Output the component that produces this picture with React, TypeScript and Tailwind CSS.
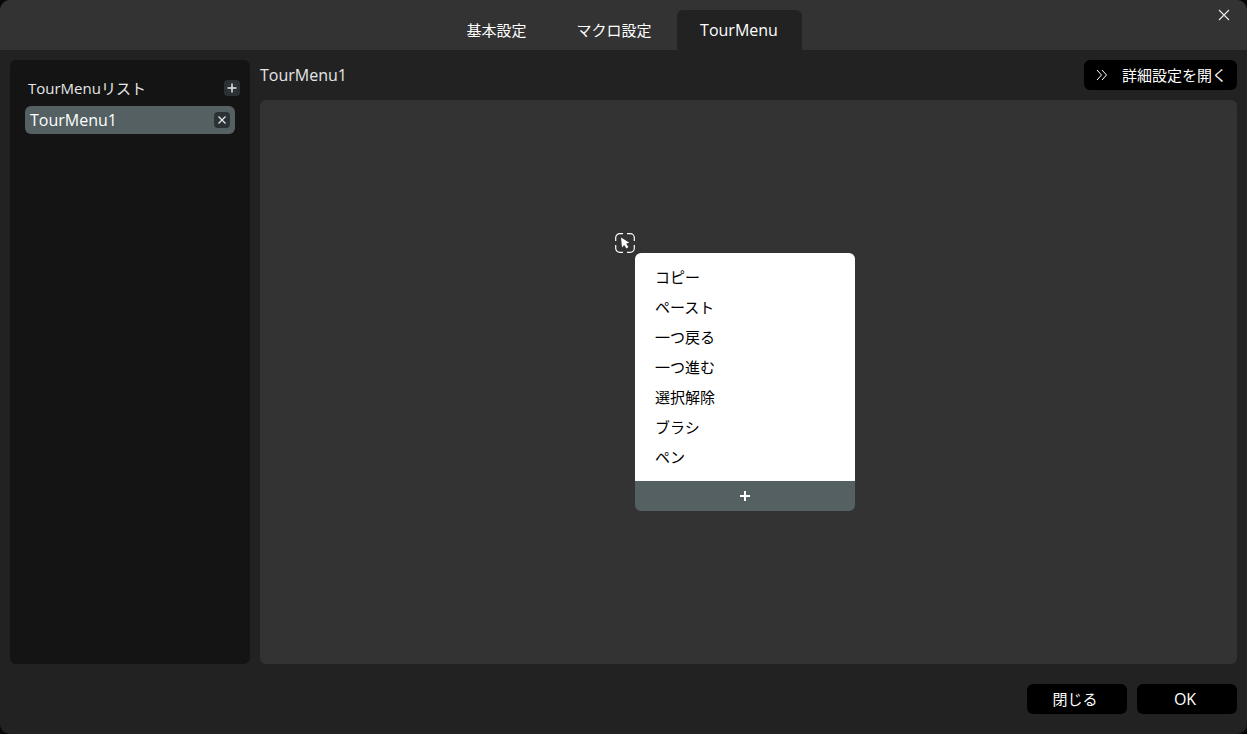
import React, { useState } from 'react';

const tabs = [
  { id: 'basic', label: '基本設定', className: 'w-[110px] text-[15px]' },
  { id: 'macro', label: 'マクロ設定', className: 'w-[125px] text-[15px]' },
  { id: 'tourmenu', label: 'TourMenu', className: 'w-[125px] text-base' },
];

const menuItems = ['コピー', 'ペースト', '一つ戻る', '一つ進む', '選択解除', 'ブラシ', 'ペン'];

const CloseIcon = () => (
  <svg width="12" height="12" viewBox="0 0 12 12" fill="none" stroke="currentColor" strokeWidth="1.2">
    <path d="M1 1l10 10M11 1L1 11" />
  </svg>
);

const PlusIcon = () => (
  <svg width="10" height="10" viewBox="0 0 10 10" fill="none" stroke="currentColor" strokeWidth="1.5">
    <path d="M5 0.5v9M0.5 5h9" />
  </svg>
);

const RemoveIcon = () => (
  <svg width="8" height="8" viewBox="0 0 8 8" fill="none" stroke="currentColor" strokeWidth="1.3">
    <path d="M0.5 0.5l7 7M7.5 0.5l-7 7" />
  </svg>
);

const ChevronsIcon = () => (
  <svg width="12" height="12" viewBox="0 0 12 12" fill="none" stroke="currentColor" strokeWidth="1">
    <path d="M1 1l4.5 5L1 11M6 1l4.5 5L6 11" />
  </svg>
);

const CursorFrameIcon = () => (
  <svg width="20" height="20" viewBox="0 0 20 20" fill="none">
    <path
      d="M0.7 8V4.7a4 4 0 0 1 4-4H8M12 0.7h3.3a4 4 0 0 1 4 4V8M19.3 12v3.3a4 4 0 0 1-4 4H12M8 19.3H4.7a4 4 0 0 1-4-4V12"
      stroke="#fff"
      strokeWidth="1.2"
    />
    <path d="M6 4.5l8.3 5.2-3.2 1 2.4 3.4-2 1.4-2.3-3.5-2.2 2.4z" fill="#fff" />
  </svg>
);

const TabBar = ({ active, onChange }: { active: string; onChange: (id: string) => void }) => (
  <header className="relative flex h-[50px] items-end justify-center bg-[#333333] pr-1">
    <nav className="flex">
      {tabs.map((tab) => (
        <button
          key={tab.id}
          type="button"
          onClick={() => onChange(tab.id)}
          className={`h-10 rounded-t-md text-center ${tab.className} ${active === tab.id ? 'bg-[#222222]' : ''}`}
        >
          {tab.label}
        </button>
      ))}
    </nav>
    <button
      type="button"
      aria-label="閉じる"
      className="absolute top-1 right-3 flex size-[22px] items-center justify-center text-[#e6e6e6]"
    >
      <CloseIcon />
    </button>
  </header>
);

const Sidebar = () => (
  <aside className="w-60 shrink-0 rounded-md bg-[#141414] pt-4 pr-[10px] pl-[15px] text-[#e6e6e6]">
    <div className="flex h-6 items-center justify-between pl-[3px]">
      <h2 className="text-[15px]">TourMenuリスト</h2>
      <button
        type="button"
        aria-label="追加"
        className="flex size-4 items-center justify-center rounded bg-[#2b3235]"
      >
        <PlusIcon />
      </button>
    </div>
    <ul className="mt-[6px] mr-[5px]">
      <li className="flex h-7 items-center justify-between rounded-md bg-[#546062] px-[5px]">
        <button type="button" className="flex-1 text-left text-base text-white">
          TourMenu1
        </button>
        <button
          type="button"
          aria-label="削除"
          className="flex size-4 items-center justify-center rounded bg-[#2b3235]"
        >
          <RemoveIcon />
        </button>
      </li>
    </ul>
  </aside>
);

const TourMenu = () => (
  <div className="relative w-[220px]">
    <div className="absolute -top-5 -left-5">
      <CursorFrameIcon />
    </div>
    <ul className="rounded-t-md bg-white py-[9px] text-black">
      {menuItems.map((item) => (
        <li key={item}>
          <button type="button" className="block h-[30px] w-full px-5 text-left text-[15px]">
            {item}
          </button>
        </li>
      ))}
    </ul>
    <button
      type="button"
      aria-label="項目を追加"
      className="flex h-[30px] w-full items-center justify-center rounded-b-md bg-[#546062]"
    >
      <svg width="10" height="10" viewBox="0 0 10 10" fill="none" stroke="currentColor" strokeWidth="2">
        <path d="M5 0v10M0 5h10" />
      </svg>
    </button>
  </div>
);

export default function App() {
  const [active, setActive] = useState('tourmenu');

  return (
    <div className="min-h-screen bg-[#080808] font-['Open_Sans','Noto_Sans_CJK_JP',sans-serif] text-white">
      <div className="flex min-h-screen flex-col overflow-hidden rounded-[10px] bg-[#222222]">
        <TabBar active={active} onChange={setActive} />
        <main className="flex flex-1 gap-[10px] px-[10px] pt-[10px]">
          <Sidebar />
          <section className="flex min-w-0 flex-1 flex-col gap-[10px]">
            <div className="flex h-[30px] items-center justify-between">
              <h1 className="text-base text-[#e6e6e6]">TourMenu1</h1>
              <button
                type="button"
                className="flex h-[30px] items-center gap-[14px] rounded-md bg-black pr-[10px] pl-3 text-[15px]"
              >
                <ChevronsIcon />
                詳細設定を開く
              </button>
            </div>
            <div className="flex flex-1 items-center justify-center rounded-md bg-[#333333] pr-[7px]">
              <TourMenu />
            </div>
          </section>
        </main>
        <footer className="flex justify-end gap-[10px] px-[10px] py-5">
          <button type="button" className="h-[30px] w-[100px] rounded-md bg-black pr-1 text-[15px]">
            閉じる
          </button>
          <button type="button" className="h-[30px] w-[100px] rounded-md bg-black pr-1 text-base">
            OK
          </button>
        </footer>
      </div>
    </div>
  );
}
